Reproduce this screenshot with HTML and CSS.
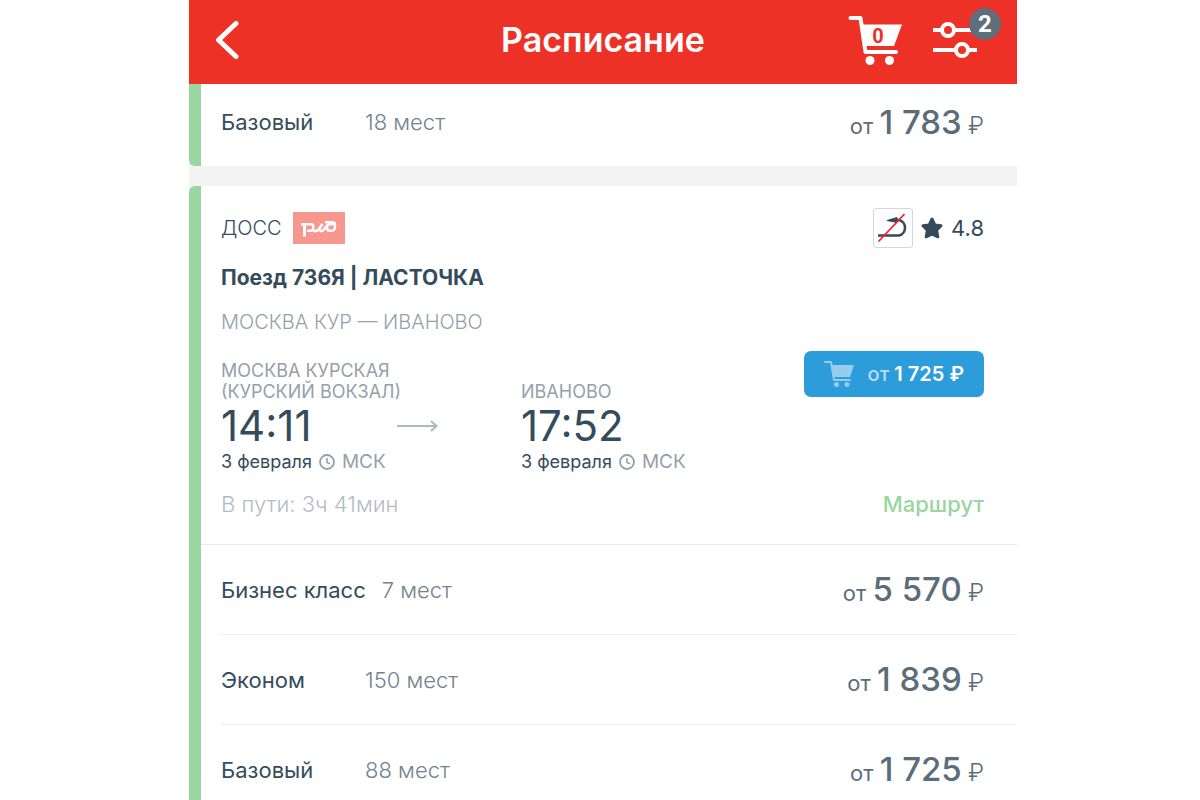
FILE: index.html
```
<!DOCTYPE html>
<html lang="ru">
<head>
    <meta charset="UTF-8">
    <title>Расписание</title>
    <link rel="stylesheet" href="styles.css">
</head>
<body>

<div class="app">

    <header class="header">
        <button class="back" type="button" aria-label="Назад">
            <svg width="24" height="40" viewBox="0 0 24 40"><path d="M21 3.500L3.500 20L21 36.500" fill="none" stroke="#fff" stroke-width="5" stroke-linecap="round" stroke-linejoin="round"/></svg>
        </button>
        <h1>Расписание</h1>
        <div class="actions">
            <button class="cart" type="button" aria-label="Корзина">
                <svg width="56" height="52" viewBox="0 0 56 52">
                    <path d="M3.500 4H13.500L18.500 38H49" fill="none" stroke="#fff" stroke-width="4" stroke-linecap="round" stroke-linejoin="round"/>
                    <path d="M14 10.500H55L47 32H17.500Z" fill="#fff"/>
                    <circle cx="23" cy="46.500" r="4.500" fill="#fff"/>
                    <circle cx="42.500" cy="46.500" r="4.500" fill="#fff"/>
                </svg>
                <span class="cart-num">0</span>
            </button>
            <button class="filter" type="button" aria-label="Фильтры">
                <svg width="44" height="40" viewBox="0 0 44 40" fill="none" stroke="#fff" stroke-width="4">
                    <path d="M0 10H9M21 10H44M0 30H22M36 30H44"/>
                    <circle cx="15" cy="10" r="6"/>
                    <circle cx="29" cy="30" r="6"/>
                </svg>
                <span class="badge">2</span>
            </button>
        </div>
    </header>

    <main class="list">

        <section class="card card-prev">
            <ul class="places">
                <li>
                    <span class="name">Базовый</span>
                    <span class="count">18 мест</span>
                    <span class="price"><small>от</small> <b>1 783</b> <i>₽</i></span>
                </li>
            </ul>
        </section>

        <section class="card">
            <div class="info">
                <div class="top">
                    <span class="type">ДОСС</span>
                    <svg class="rzd" width="52" height="32" viewBox="0 0 52 32" role="img" aria-label="РЖД">
                        <rect width="52" height="32" fill="#f79790"/>
                        <g fill="none" stroke="#fff">
                            <path d="M8 12.300H18Q20.300 12.300 20.300 14.500V16Q20.300 18.800 17.500 18.800H14" stroke-width="2.400"/>
                            <path d="M11.500 12V24.500" stroke-width="3"/>
                            <path d="M20.500 18.900H23Q24.500 18.900 25.500 17.500L29.500 12M26.500 18.900H28.500Q30 18.900 31 17.500L34 13.500Q35 12.200 37 12.200H41" stroke-width="2.600"/>
                            <path d="M32 10.200H39.500Q42 10.200 42 12.500V15Q42 18.800 38 18.800H36.500Q34.300 18.800 34.300 16.500V14.500" stroke-width="2.400"/>
                        </g>
                    </svg>
                    <span class="noreturn">
                        <svg width="38" height="38" viewBox="0 0 38 38">
                            <path d="M4 26.500H25A8 8 0 0 0 25 11H21" fill="none" stroke="#344b5b" stroke-width="2.500"/>
                            <path d="M13 11.500L23 8.500V13.500Z" fill="#344b5b" stroke="#344b5b"/>
                            <path d="M4.500 32.500L30.500 5" stroke="#f81f2b" stroke-width="1.800"/>
                        </svg>
                    </span>
                    <svg class="star" width="22" height="24" viewBox="0 0 22 24"><path d="M11 3L13.800 9L20 9.800L15.600 14.300L16.800 20.800L11 18L5.200 20.800L6.400 14.300L2 9.800L8.200 9Z" fill="#344b5b" stroke="#344b5b" stroke-width="3" stroke-linejoin="round"/></svg>
                    <span class="rating">4.8</span>
                </div>

                <h2>Поезд 736Я | ЛАСТОЧКА</h2>
                <p class="route">МОСКВА КУР — ИВАНОВО</p>

                <div class="trip">
                    <div class="stop">
                        <p class="station">МОСКВА КУРСКАЯ<br>(КУРСКИЙ ВОКЗАЛ)</p>
                        <div class="time">
                            <time>14:11</time>
                            <svg width="42" height="14" viewBox="0 0 42 14"><path d="M1 7H40M35 2L40.500 7L35 12" fill="none" stroke="#b0b8be" stroke-width="2"/></svg>
                        </div>
                        <p class="date">3 февраля
                            <svg width="16" height="16" viewBox="0 0 16 16"><circle cx="8" cy="8" r="7" fill="none" stroke="#94a0aa" stroke-width="1.800"/><path d="M8 4V8.500L11 9.800" fill="none" stroke="#94a0aa" stroke-width="1.600"/></svg>
                            <span>МСК</span>
                        </p>
                    </div>
                    <div class="stop">
                        <p class="station">ИВАНОВО</p>
                        <div class="time"><time>17:52</time></div>
                        <p class="date">3 февраля
                            <svg width="16" height="16" viewBox="0 0 16 16"><circle cx="8" cy="8" r="7" fill="none" stroke="#94a0aa" stroke-width="1.800"/><path d="M8 4V8.500L11 9.800" fill="none" stroke="#94a0aa" stroke-width="1.600"/></svg>
                            <span>МСК</span>
                        </p>
                    </div>
                    <button class="buy" type="button">
                        <svg width="30" height="28" viewBox="0 0 30 28">
                            <path d="M1 2H7L10 20H26" fill="none" stroke="#95cdee" stroke-width="2" stroke-linecap="round" stroke-linejoin="round"/>
                            <path d="M7.500 5H30L26 17H9.500Z" fill="#95cdee"/>
                            <circle cx="12.500" cy="24.500" r="2.500" fill="#95cdee"/>
                            <circle cx="23" cy="24.500" r="2.500" fill="#95cdee"/>
                        </svg>
                        <span><small>от</small> 1 725 ₽</span>
                    </button>
                </div>

                <div class="bottom">
                    <span class="duration">В пути: 3ч 41мин</span>
                    <a href="#">Маршрут</a>
                </div>
            </div>

            <ul class="places">
                <li>
                    <span class="name">Бизнес класс</span>
                    <span class="count">7 мест</span>
                    <span class="price"><small>от</small> <b>5 570</b> <i>₽</i></span>
                </li>
                <li>
                    <span class="name">Эконом</span>
                    <span class="count">150 мест</span>
                    <span class="price"><small>от</small> <b>1 839</b> <i>₽</i></span>
                </li>
                <li>
                    <span class="name">Базовый</span>
                    <span class="count">88 мест</span>
                    <span class="price"><small>от</small> <b>1 725</b> <i>₽</i></span>
                </li>
            </ul>
        </section>

    </main>

</div>

</body>
</html>
```
FILE: styles.css
```
*{
    margin: 0;
    padding: 0;
    box-sizing: border-box;
    list-style: none;
}
body{
    padding: 0 183px 0 189px;
    background: #fff;
    color: #344b5b;
    font-family: Inter, "Liberation Sans", sans-serif;
    font-size: 22px;
}
button{
    border: 0;
    background: none;
    font-family: inherit;
    cursor: pointer;
}
svg{
    display: block;
    flex-shrink: 0;
}
.app{
    display: flex;
    flex-direction: column;
    height: 100vh;
    overflow: hidden;
}

/* шапка */
.header{
    display: grid;
    grid-template-columns: 1fr auto 1fr;
    align-items: center;
    flex-shrink: 0;
    height: 84px;
    padding: 0 26px 4px;
    background: #ee3126;
    color: #fff;
}
.header h1{
    font-size: 34px;
    font-weight: 600;
    line-height: 40px;
}
.back{
    justify-self: start;
}
.actions{
    display: flex;
    align-items: center;
    justify-content: flex-end;
    gap: 30px;
    padding-right: 14px;
}
.cart{
    position: relative;
}
.cart-num{
    position: absolute;
    left: 0;
    top: 10px;
    width: 62px;
    color: #ee3126;
    font-family: Roboto, sans-serif;
    font-size: 20px;
    font-weight: 700;
    line-height: 24px;
    text-align: center;
}
.filter{
    position: relative;
}
.badge{
    position: absolute;
    right: -24px;
    top: -12px;
    width: 32px;
    height: 32px;
    border-radius: 50%;
    background: #5f6e79;
    color: #fff;
    font-family: Roboto, sans-serif;
    font-size: 24px;
    font-weight: 700;
    line-height: 32px;
    text-align: center;
}

/* список поездов */
.list{
    flex: 1;
    overflow: hidden;
    background: #f3f3f3;
}
.card{
    border-left: 12px solid #9ad6a0;
    border-radius: 6px 0 0 6px;
    background: #fff;
}
.card-prev{
    margin-bottom: 20px;
    border-radius: 0 0 0 6px;
}
.info{
    padding: 22px 33px 26px 20px;
    border-bottom: 1px solid #e8eaeb;
}
.top{
    display: flex;
    align-items: center;
    height: 40px;
}
.type{
    font-size: 20px;
    font-weight: 300;
}
.rzd{
    margin-left: 11px;
}
.noreturn{
    margin-left: auto;
    border: 1px solid #d3d8dc;
    border-radius: 3px;
}
.star{
    margin: 0 8px;
}
.info h2{
    margin-top: 16px;
    font-size: 21px;
    font-weight: 700;
    line-height: 28px;
}
.route{
    margin-top: 16px;
    color: #94a0aa;
    font-size: 20px;
    font-weight: 300;
    line-height: 28px;
}
.trip{
    display: flex;
    align-items: flex-end;
    margin-top: 15px;
}
.stop{
    width: 217px;
    padding-top: 9px;
}
.stop:first-child{
    flex-shrink: 0;
    margin-right: 83px;
}
.station{
    color: #94a0aa;
    font-size: 18px;
    line-height: 21px;
}
.time{
    display: flex;
    align-items: center;
    justify-content: space-between;
    font-size: 42px;
    line-height: 48px;
}
.date{
    display: flex;
    align-items: center;
    gap: 7px;
    font-size: 18px;
    line-height: 24px;
}
.date span{
    color: #94a0aa;
    font-size: 19px;
}
.buy{
    display: flex;
    align-items: center;
    align-self: flex-start;
    justify-content: space-between;
    flex-shrink: 0;
    width: 180px;
    height: 46px;
    margin-left: auto;
    padding: 0 20px;
    border-radius: 7px;
    background: #2d9cdb;
    color: #fff;
    font-size: 20px;
    font-weight: 600;
}
.buy small{
    color: #b9def4;
    font-size: 20px;
    font-weight: 500;
}
.bottom{
    display: flex;
    justify-content: space-between;
    margin-top: 16px;
    line-height: 28px;
}
.duration{
    color: #b4bcc3;
    font-weight: 300;
}
.bottom a{
    color: #9ad6a0;
    font-weight: 500;
    text-decoration: none;
}

/* классы мест и цены */
.places li{
    display: flex;
    align-items: center;
    height: 90px;
    margin-left: 20px;
    padding-right: 33px;
    border-bottom: 1px solid #eceeef;
}
.card-prev li{
    height: 82px;
    padding-bottom: 6px;
    border-bottom: 0;
}
.name{
    min-width: 128px;
    margin-right: 16px;
}
.count{
    color: #74828d;
    font-weight: 300;
}
.price{
    margin-left: auto;
    padding-top: 3px;
    color: #5c6d7a;
    line-height: 40px;
}
.price small{
    font-size: 22px;
}
.price b{
    font-size: 33px;
    font-weight: 500;
}
.price i{
    font-size: 24px;
    font-style: normal;
    font-weight: 300;
}
```
